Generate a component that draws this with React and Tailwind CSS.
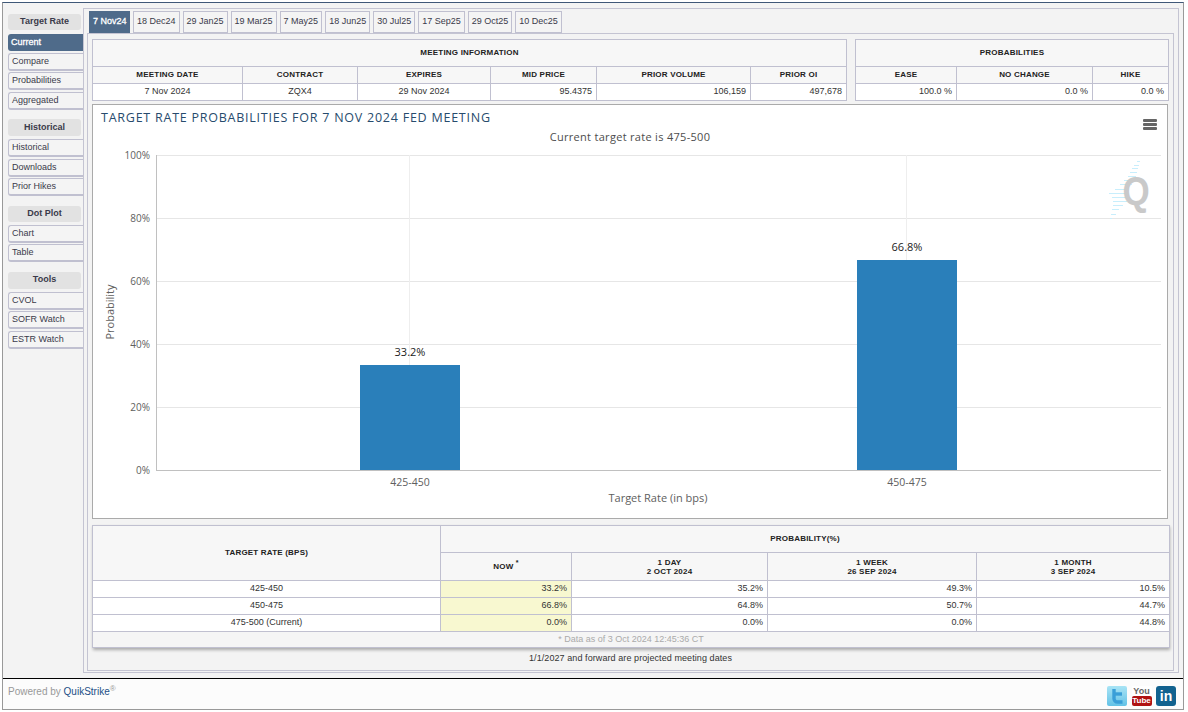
import React from 'react';

const sideGroups = [
  { title: 'Target Rate', head: 'h-[16px] mb-[4px]', items: ['Current', 'Compare', 'Probabilities', 'Aggregated'] },
  { title: 'Historical', head: 'h-[17px] mb-[3px]', items: ['Historical', 'Downloads', 'Prior Hikes'] },
  { title: 'Dot Plot', head: 'h-[16px] mb-[3px]', items: ['Chart', 'Table'] },
  { title: 'Tools', head: 'h-[17px] mb-[3px]', items: ['CVOL', 'SOFR Watch', 'ESTR Watch'] },
];

const tabs = ['7 Nov24', '18 Dec24', '29 Jan25', '19 Mar25', '7 May25', '18 Jun25', '30 Jul25', '17 Sep25', '29 Oct25', '10 Dec25'];

const meetingCols = [150, 115, 133, 106, 154, 96];
const meetingHead = ['MEETING DATE', 'CONTRACT', 'EXPIRES', 'MID PRICE', 'PRIOR VOLUME', 'PRIOR OI'];
const probCols = [101, 136, 76];

const rows = [
  ['425-450', '33.2%', '35.2%', '49.3%', '10.5%'],
  ['450-475', '66.8%', '64.8%', '50.7%', '44.7%'],
  ['475-500 (Current)', '0.0%', '0.0%', '0.0%', '44.8%'],
];

const grid = [155, 218, 281, 344, 407];
const ticks = [['100%', 155], ['80%', 218], ['60%', 281], ['40%', 344], ['20%', 407], ['0%', 470]];

const stripes = [
  [1137, 161, 3], [1134, 165, 5], [1132, 168, 6], [1130, 172, 7], [1128, 176, 8],
  [1124, 180, 10], [1120, 184, 12], [1115, 189, 14], [1109, 193, 18], [1112, 197, 15],
  [1113, 201, 14], [1113, 205, 10], [1112, 209, 7], [1111, 214, 5], [1110, 218, 2],
];

const th = 'border border-[#c0c0d0] bg-[#f7f7f7] font-bold text-[8px] tracking-[0.2px] text-[#222] text-center p-0';
const td = 'border border-[#c0c0d0] bg-white text-[9px] text-[#333] p-0';

const Sidebar = () => (
  <div className="w-[75px] ml-[5px] pt-[11px] shrink-0">
    {sideGroups.map((group) => (
      <div key={group.title} className="mb-[9.5px]">
        <div className={`${group.head} mr-[2px] rounded-[3px] bg-[#e2e2e2] flex items-center justify-center text-[9px] font-bold text-[#3a3a4a]`}>
          {group.title}
        </div>
        <div className="flex flex-col gap-[1.5px]">
          {group.items.map((item) => (
            <div
              key={item}
              className={
                item === 'Current'
                  ? 'h-[17px] rounded-l-[3px] bg-[#4f6b8a] text-white text-[9px] [-webkit-text-stroke:0.3px_white] pl-[3px] leading-[16px]'
                  : 'h-[18px] rounded-l-[3px] border border-r-0 border-[#c0c0d0] border-b-2 bg-[#f4f4f4] text-[9px] text-[#3a3a4a] pl-[3px] leading-[15px]'
              }
            >
              {item}
            </div>
          ))}
        </div>
      </div>
    ))}
  </div>
);

const Tabs = () => (
  <div className="flex gap-[3px] pl-[5px] pt-[2px] h-[24px] relative z-10">
    {tabs.map((tab, i) => (
      <div
        key={tab}
        className={
          i === 0
            ? 'w-[41px] h-[22px] pl-[4px] bg-[#4f6b8a] text-white text-[9px] [-webkit-text-stroke:0.3px_white] flex items-center'
            : 'h-[22px] px-[3px] bg-[#f4f4f4] border border-[#c0c0d0] text-[#3a3a4a] text-[9px] flex items-center'
        }
      >
        {tab}
      </div>
    ))}
  </div>
);

const MeetingTables = () => (
  <div className="flex justify-between">
    <table className="table-fixed border-collapse w-[754px]">
      <colgroup>
        {meetingCols.map((w, i) => <col key={i} style={{ width: w }} />)}
      </colgroup>
      <tbody>
        <tr className="h-[27px]"><th colSpan={6} className={th}>MEETING INFORMATION</th></tr>
        <tr className="h-[17px]">{meetingHead.map((h) => <th key={h} className={th}>{h}</th>)}</tr>
        <tr className="h-[17px]">
          <td className={`${td} text-center`}>7 Nov 2024</td>
          <td className={`${td} text-center`}>ZQX4</td>
          <td className={`${td} text-center`}>29 Nov 2024</td>
          <td className={`${td} text-right pr-[4px]`}>95.4375</td>
          <td className={`${td} text-right pr-[4px]`}>106,159</td>
          <td className={`${td} text-right pr-[4px]`}>497,678</td>
        </tr>
      </tbody>
    </table>
    <table className="table-fixed border-collapse w-[313px]">
      <colgroup>
        {probCols.map((w, i) => <col key={i} style={{ width: w }} />)}
      </colgroup>
      <tbody>
        <tr className="h-[27px]"><th colSpan={3} className={th}>PROBABILITIES</th></tr>
        <tr className="h-[17px]">
          <th className={th}>EASE</th>
          <th className={th}>NO CHANGE</th>
          <th className={th}>HIKE</th>
        </tr>
        <tr className="h-[17px]">
          <td className={`${td} text-right pr-[4px]`}>100.0 %</td>
          <td className={`${td} text-right pr-[4px]`}>0.0 %</td>
          <td className={`${td} text-right pr-[4px]`}>0.0 %</td>
        </tr>
      </tbody>
    </table>
  </div>
);

const Chart = () => {
  const font = { fontFamily: '"Open Sans", sans-serif' };
  return (
    <div className="mt-[3px] mr-[1px] h-[415px] border border-[#aaaaaa] bg-white">
      <svg width="1075" height="413" viewBox="93 105 1075 413" className="block" style={font}>
        {grid.map((y) => <line key={y} x1="156" x2="1161" y1={y + 0.5} y2={y + 0.5} stroke="#e6e6e6" />)}
        <line x1="409.5" x2="409.5" y1="155" y2="470" stroke="#eeeeee" />
        <line x1="906.5" x2="906.5" y1="155" y2="470" stroke="#eeeeee" />
        <line x1="156.5" x2="156.5" y1="155" y2="470" stroke="#c0c0c0" />
        <line x1="156" x2="1161" y1="470.5" y2="470.5" stroke="#c0c0c0" />
        {ticks.map(([label, y]) => (
          <text key={label} x="150" y={y + 4} textAnchor="end" fontSize="10" fill="#606060">{label}</text>
        ))}
        <text x="101" y="122" fontSize="12.5" fill="#274b6d" letterSpacing="0.76">TARGET RATE PROBABILITIES FOR 7 NOV 2024 FED MEETING</text>
        <text x="630" y="141" textAnchor="middle" fontSize="11" fill="#4d4d4d" letterSpacing="0.3">Current target rate is 475-500</text>
        <rect x="360" y="365" width="100" height="105" fill="#2a7fba" />
        <rect x="857" y="260" width="100" height="210" fill="#2a7fba" />
        <text x="410" y="356" textAnchor="middle" fontSize="11" fill="#222">33.2%</text>
        <text x="907" y="251" textAnchor="middle" fontSize="11" fill="#222">66.8%</text>
        <text x="410" y="486" textAnchor="middle" fontSize="10.5" fill="#606060">425-450</text>
        <text x="907" y="486" textAnchor="middle" fontSize="10.5" fill="#606060">450-475</text>
        <text x="658" y="502" textAnchor="middle" fontSize="11" fill="#606060">Target Rate (in bps)</text>
        <text transform="translate(114 312) rotate(-90)" textAnchor="middle" fontSize="11" fill="#606060">Probability</text>
        {/* export menu */}
        <g fill="#666666">
          <rect x="1143" y="119" width="14" height="3" rx="1" />
          <rect x="1143" y="123" width="14" height="3" rx="1" />
          <rect x="1143" y="127" width="14" height="3" rx="1" />
        </g>
        {/* watermark */}
        <g fill="#c8eefc">
          {stripes.map(([x, y, w]) => <rect key={y} x={x} y={y} width={w} height="1" />)}
        </g>
        <text transform="translate(1136 205) scale(1 1.15)" textAnchor="middle" fontSize="35" fontWeight="700" fill="#c9c9c9" style={{ fontFamily: '"Liberation Sans", sans-serif' }}>Q</text>
      </svg>
    </div>
  );
};

const ProbTable = () => (
  <div className="mt-[6px] shadow-[1px_2px_3px_rgba(0,0,0,0.3)]">
    <table className="table-fixed border-collapse w-full">
      <colgroup>
        <col style={{ width: 348 }} />
        <col style={{ width: 131 }} />
        <col style={{ width: 196 }} />
        <col style={{ width: 209 }} />
        <col style={{ width: 193 }} />
      </colgroup>
      <tbody>
        <tr className="h-[27px]">
          <th rowSpan={2} className={th}>TARGET RATE (BPS)</th>
          <th colSpan={4} className={th}>PROBABILITY(%)</th>
        </tr>
        <tr className="h-[28px]">
          <th className={th}>NOW <sup className="text-[7px]">*</sup></th>
          <th className={`${th} leading-[9px]`}>1 DAY<br />2 OCT 2024</th>
          <th className={`${th} leading-[9px]`}>1 WEEK<br />26 SEP 2024</th>
          <th className={`${th} leading-[9px]`}>1 MONTH<br />3 SEP 2024</th>
        </tr>
        {rows.map((r) => (
          <tr key={r[0]} className="h-[17px]">
            <td className={`${td} text-center`}>{r[0]}</td>
            <td className={`${td} text-right pr-[4px] !bg-[#f8f8d0]`}>{r[1]}</td>
            <td className={`${td} text-right pr-[4px]`}>{r[2]}</td>
            <td className={`${td} text-right pr-[4px]`}>{r[3]}</td>
            <td className={`${td} text-right pr-[4px]`}>{r[4]}</td>
          </tr>
        ))}
        <tr className="h-[16px]">
          <td colSpan={5} className="border border-[#c0c0d0] bg-[#f5f5f5] text-center text-[9px] leading-[13px] text-[#aaaaaa] p-0">
            * Data as of 3 Oct 2024 12:45:36 CT
          </td>
        </tr>
      </tbody>
    </table>
  </div>
);

const SocialIcons = () => (
  <div className="flex items-center gap-[4.5px] mt-[3px]">
    <div className="w-[20px] h-[20px] rounded-[2px] bg-gradient-to-b from-[#a8e4f5] to-[#62c2e6]">
      <svg width="20" height="20" viewBox="0 0 20 20" fill="none" stroke="#3a9fd8" strokeWidth="3.4">
        <path d="M7 3v9.5a3.5 3.5 0 0 0 3.5 3.5h5" />
        <path d="M7 8h8" />
      </svg>
    </div>
    <div className="w-[20px] h-[20px] flex flex-col items-center bg-white font-bold">
      <div className="h-[10px] text-[9px] leading-[10px] text-[#666666]">You</div>
      <div className="w-full h-[10px] bg-[#b01212] text-white text-center text-[8px] leading-[10px] rounded-[2px]">Tube</div>
    </div>
    <div className="w-[20px] h-[20px] rounded-[3px] bg-[#12628f] flex items-center justify-center text-white font-bold text-[14px] leading-none">in</div>
  </div>
);

export default function App() {
  return (
    <div className="w-[1188px] h-[712px] bg-white pt-[2px] pl-[2px] font-['Liberation_Sans',Arial,sans-serif]">
      <div className="w-[1182px] h-[708px] border border-[#999999] border-t-[#3f5878] flex flex-col bg-[#f3f3f3]">
        <div className="flex flex-1 items-start">
          <Sidebar />
          <div className="w-[1096px] h-[665px] mt-[5px] border border-[#c4c4d2] flex flex-col">
            <Tabs />
            <div className="ml-[3px] w-[1087px] h-[638px] border border-[#c4c4d2] pt-[5px] px-[4px]">
              <MeetingTables />
              <Chart />
              <ProbTable />
              <div className="text-center text-[9px] tracking-[0.08px] text-[#333] mt-[4px]">1/1/2027 and forward are projected meeting dates</div>
            </div>
          </div>
        </div>
        <div className="h-[31px] border-t border-black bg-[#fcfcfc] flex items-center justify-between pl-[5px] pr-[7px]">
          <div className="text-[10px] text-[#999999] mb-[6px]">
            Powered by <span className="text-[#1d4f86]">QuikStrike</span><sup className="text-[8px]">®</sup>
          </div>
          <SocialIcons />
        </div>
      </div>
    </div>
  );
}
